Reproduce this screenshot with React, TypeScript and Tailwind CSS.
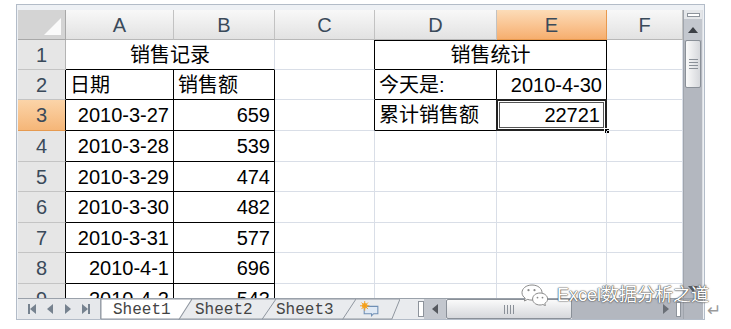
import React from "react";

type Align = "l" | "r" | "c";

interface CellProps {
  w: string;
  text?: string;
  align?: Align;
  r?: boolean; // black right border
  b?: boolean; // black bottom border
  extra?: string;
  children?: React.ReactNode;
}

function Cell({ w, text, align = "l", r, b, extra = "", children }: CellProps) {
  const justify = align === "r" ? "justify-end" : align === "c" ? "justify-center" : "justify-start";
  return (
    <div
      className={`relative flex shrink-0 items-center whitespace-nowrap border-r border-b px-[4px] text-[20px] text-black ${w} ${justify} ${
        r ? "border-r-black" : "border-r-[#d9dee7]"
      } ${b ? "border-b-black" : "border-b-[#d9dee7]"} ${extra}`}
    >
      {text}
      {children}
    </div>
  );
}

function RowHead({ n, active, dark = true }: { n: number; active?: boolean; dark?: boolean }) {
  return (
    <div
      className={`flex w-[48px] shrink-0 items-center justify-center border-r border-b text-[20px] text-[#3a4a5a] ${
        active ? "bg-linear-to-b from-[#fbd4a8] to-[#f5b678] border-b-[#e69a50]" : "bg-[#e6e6e6] border-b-[#c4c4c4]"
      } ${dark ? "border-r-black" : "border-r-[#b4b4b4]"}`}
    >
      {n}
    </div>
  );
}

function ColHead({ w, label, active }: { w: string; label: string; active?: boolean }) {
  return (
    <div
      className={`flex shrink-0 items-center justify-center border-r border-b text-[20px] text-[#3a4a5a] ${w} ${
        active
          ? "bg-linear-to-b from-[#fcdcb8] to-[#f6ae6e] border-r-[#e8994e] border-b-[#e8994e]"
          : "bg-linear-to-b from-[#f8f8f8] to-[#e2e2e2] border-r-[#c2c2c2] border-b-[#b8b8b8]"
      }`}
    >
      {label}
    </div>
  );
}

const sales = [
  { n: 4, h: "h-[31px]", d: "2010-3-28", v: "539" },
  { n: 5, h: "h-[30px]", d: "2010-3-29", v: "474" },
  { n: 6, h: "h-[31px]", d: "2010-3-30", v: "482" },
  { n: 7, h: "h-[30px]", d: "2010-3-31", v: "577" },
  { n: 8, h: "h-[31px]", d: "2010-4-1", v: "696" },
  { n: 9, h: "h-[31px]", d: "2010-4-2", v: "543" },
];

function Tri({ dir, className = "" }: { dir: "up" | "down" | "left" | "right"; className?: string }) {
  const pts = {
    up: "0,6 5,0 10,6",
    down: "0,0 10,0 5,6",
    left: "6,0 6,10 0,5",
    right: "0,0 0,10 6,5",
  }[dir];
  const vb = dir === "up" || dir === "down" ? "0 0 10 6" : "0 0 6 10";
  const size = dir === "up" || dir === "down" ? "w-[10px] h-[6px]" : "w-[6px] h-[10px]";
  return (
    <svg viewBox={vb} className={`${size} ${className}`}>
      <polygon points={pts} fill="currentColor" />
    </svg>
  );
}

function Tab({
  w,
  z,
  active,
  first,
  pad,
  children,
}: {
  w: string;
  z: string;
  active?: boolean;
  first?: boolean;
  pad: string;
  children: React.ReactNode;
}) {
  return (
    <div className={`relative flex h-[21px] shrink-0 items-center ${w} ${z} ${first ? "" : "-ml-[14px]"} ${pad}`}>
      <svg className="absolute inset-0 h-full w-full" viewBox="0 0 100 21" preserveAspectRatio="none">
        <polygon
          points="0,0 100,0 86,20 0,20"
          fill={active ? "#ffffff" : "#e9ebee"}
          stroke="#8f969f"
          strokeWidth="1"
          vectorEffect="non-scaling-stroke"
        />
      </svg>
      <span className="relative font-['Liberation_Mono',monospace] text-[16px] leading-none text-[#444444]">
        {children}
      </span>
    </div>
  );
}

export default function App() {
  return (
    <div className="relative h-[329px] w-[731px] overflow-hidden bg-white font-['Liberation_Sans','Noto_Sans_CJK_SC',sans-serif]">
      {/* excel window */}
      <div className="ml-[16px] mt-[4px] flex h-[316px] w-[689px] flex-col border border-[#b3bcc8] bg-[#eef1f5] px-px pt-[5px]">
        <div className="flex h-[288px]">
          {/* sheet grid */}
          <div className="flex w-[665px] flex-col overflow-hidden bg-white">
            <div className="flex h-[30px] shrink-0">
              <div className="relative w-[48px] shrink-0 border-r border-b border-r-[#a8a8a8] border-b-[#a8a8a8] bg-[#d4d4d4]">
                <svg className="absolute bottom-[4px] right-[4px] h-[17px] w-[17px]" viewBox="0 0 17 17">
                  <polygon points="17,0 17,17 0,17" fill="#fafafa" />
                </svg>
              </div>
              <ColHead w="w-[108px]" label="A" />
              <ColHead w="w-[101px]" label="B" />
              <ColHead w="w-[100px]" label="C" />
              <ColHead w="w-[122px]" label="D" />
              <ColHead w="w-[110px]" label="E" active />
              <ColHead w="w-[76px]" label="F" />
            </div>

            <div className="flex h-[30px] shrink-0">
              <RowHead n={1} dark={false} />
              <Cell w="w-[209px]" text="销售记录" align="c" b />
              <Cell w="w-[100px]" r />
              <Cell w="w-[232px]" text="销售统计" align="c" r b extra="shadow-[inset_0_1px_0_#000]" />
              <Cell w="w-[76px]" />
            </div>

            <div className="flex h-[30px] shrink-0">
              <RowHead n={2} />
              <Cell w="w-[108px]" text="日期" r b />
              <Cell w="w-[101px]" text="销售额" r b />
              <Cell w="w-[100px]" r />
              <Cell w="w-[122px]" text="今天是:" r b />
              <Cell w="w-[110px]" text="2010-4-30" align="r" r b />
              <Cell w="w-[76px]" />
            </div>

            <div className="flex h-[31px] shrink-0">
              <RowHead n={3} active />
              <Cell w="w-[108px]" text="2010-3-27" align="r" r b />
              <Cell w="w-[101px]" text="659" align="r" r b />
              <Cell w="w-[100px]" r />
              <Cell w="w-[122px]" text="累计销售额" r b />
              <Cell w="w-[110px]" text="22721" align="r" r b extra="pr-[6px]">
                <div className="pointer-events-none absolute -left-px -top-px bottom-[-1px] right-[-1px] border-2 border-[#222222] shadow-[inset_0_0_0_1px_#ffffff,inset_0_0_0_2px_#555555]" />
                <div className="absolute bottom-[-4px] right-[-4px] h-[6px] w-[6px] border border-white bg-black" />
              </Cell>
              <Cell w="w-[76px]" />
            </div>

            {sales.map((s) => (
              <div key={s.n} className={`flex shrink-0 ${s.h}`}>
                <RowHead n={s.n} />
                <Cell w="w-[108px]" text={s.d} align="r" r b />
                <Cell w="w-[101px]" text={s.v} align="r" r b />
                <Cell w="w-[100px]" />
                <Cell w="w-[122px]" />
                <Cell w="w-[110px]" />
                <Cell w="w-[76px]" />
              </div>
            ))}
          </div>

          {/* vertical scrollbar */}
          <div className="flex w-[20px] flex-col border-l border-r border-l-[#a0a5ad] border-r-[#dde0e4] bg-[#b3b7bf]">
            <div className="flex h-[9px] items-center justify-center bg-[#e4e6e9]">
              <div className="h-[4px] w-[13px] border border-[#8d939b] bg-white" />
            </div>
            <div className="flex h-[21px] items-center justify-center bg-[#c3c7ce] text-[#3b3f45]">
              <Tri dir="up" />
            </div>
            <div className="mx-px flex h-[48px] flex-col items-center justify-center gap-[2px] rounded-[2px] border border-[#8a9098] bg-linear-to-r from-[#fafafa] to-[#d6d8dc]">
              <div className="h-px w-[9px] bg-[#8a9098]" />
              <div className="h-px w-[9px] bg-[#8a9098]" />
              <div className="h-px w-[9px] bg-[#8a9098]" />
              <div className="h-px w-[9px] bg-[#8a9098]" />
            </div>
            <div className="flex-1" />
            <div className="flex h-[18px] items-center justify-center text-[#55595f]">
              <Tri dir="down" />
            </div>
          </div>
        </div>

        {/* sheet tabs + horizontal scrollbar */}
        <div className="flex h-[21px] border-t border-[#9aa1aa] bg-[#e9ebee]">
          <div className="flex w-[83px] shrink-0 items-center justify-around border-r border-[#9aa1aa] bg-[#e6e8eb] px-[4px] text-[#76828f]">
            <div className="flex items-center">
              <div className="h-[10px] w-[2px] bg-current" />
              <Tri dir="left" />
            </div>
            <Tri dir="left" />
            <Tri dir="right" />
            <div className="flex items-center">
              <Tri dir="right" />
              <div className="h-[10px] w-[2px] bg-current" />
            </div>
          </div>

          <div className="flex shrink-0">
            <Tab w="w-[91px]" z="z-40" active first pad="pl-[12px]">
              Sheet1
            </Tab>
            <Tab w="w-[98px]" z="z-30" pad="pl-[17px]">
              Sheet2
            </Tab>
            <Tab w="w-[94px]" z="z-20" pad="pl-[14px]">
              Sheet3
            </Tab>
            <Tab w="w-[58px]" z="z-10" pad="pl-[18px]">
              <svg viewBox="0 0 20 16" className="block h-[17px] w-[21px]">
                <path d="M4 5 H17 V12 H13 L11 14 V12 H4 Z" fill="#dfe9f5" stroke="#6f8fb5" strokeWidth="1" />
                <circle cx="4.5" cy="4.5" r="2.6" fill="#f6b32c" />
                <path d="M4.5 0 V9 M0 4.5 H9 M1.4 1.4 L7.6 7.6 M7.6 1.4 L1.4 7.6" stroke="#f39a1c" strokeWidth="0.9" />
              </svg>
            </Tab>
          </div>

          <div className="w-[18px] shrink-0" />
          <div className="my-[2px] w-[6px] shrink-0 border border-[#8d939b] bg-white" />
          <div className="flex w-[22px] shrink-0 items-center justify-center bg-[#c3c7ce] text-[#55595f]">
            <Tri dir="left" />
          </div>
          <div className="flex w-[126px] shrink-0 items-center justify-center gap-[2px] rounded-[2px] border border-[#8a9098] bg-linear-to-b from-[#fafafa] to-[#d6d8dc]">
            <div className="h-[9px] w-px bg-[#8a9098]" />
            <div className="h-[9px] w-px bg-[#8a9098]" />
            <div className="h-[9px] w-px bg-[#8a9098]" />
            <div className="h-[9px] w-px bg-[#8a9098]" />
          </div>
          <div className="flex-1 bg-[#b3b7bf]" />
          <div className="flex w-[16px] shrink-0 items-center justify-center bg-[#b3b7bf] text-[#6a6f76]">
            <Tri dir="right" />
          </div>
          <div className="flex w-[9px] shrink-0 items-center justify-center bg-[#b3b7bf]">
            <div className="h-[15px] w-[5px] border border-[#8d939b] bg-white" />
          </div>
          <div className="w-[20px] shrink-0 border-l border-[#a0a5ad] bg-[#b3b7bf]" />
        </div>
      </div>

      {/* watermark */}
      <div className="absolute left-[521px] top-[284px] flex items-center gap-[8px]">
        <svg viewBox="0 0 28 22" className="h-[22px] w-[28px]">
          <path
            d="M11 1 C5 1 1 4.6 1 8.6 C1 11 2.3 12.9 4.2 14.2 L3.4 17 L6.6 15.4 C8 15.9 9.4 16.1 11 16.1 C17 16.1 21 12.6 21 8.6 C21 4.6 17 1 11 1 Z"
            fill="#ffffff"
            stroke="#8a8a8a"
            strokeWidth="1"
          />
          <path
            d="M19 9 C14.6 9 11.6 11.8 11.6 15 C11.6 18.2 14.6 21 19 21 C20 21 21 20.8 21.8 20.5 L24.4 21.6 L23.8 19.4 C25.6 18.3 26.6 16.8 26.6 15 C26.6 11.8 23.4 9 19 9 Z"
            fill="#ffffff"
            stroke="#8a8a8a"
            strokeWidth="1"
          />
          <circle cx="7.5" cy="6.2" r="1.1" fill="#8a8a8a" />
          <circle cx="13.5" cy="6.2" r="1.1" fill="#8a8a8a" />
          <circle cx="16.5" cy="13.6" r="0.9" fill="#8a8a8a" />
          <circle cx="21.5" cy="13.6" r="0.9" fill="#8a8a8a" />
        </svg>
        <span className="text-[18px] leading-none text-white [text-shadow:0_0_1px_#4a4a4a,0_0_1px_#4a4a4a,0_0_2px_#6a6a6a]">
          Excel数据分析之道
        </span>
      </div>

      <div className="absolute left-[707px] top-[302px] font-['DejaVu_Sans',sans-serif] text-[17px] leading-none text-[#9a9a9a]">
        ↵
      </div>
    </div>
  );
}
